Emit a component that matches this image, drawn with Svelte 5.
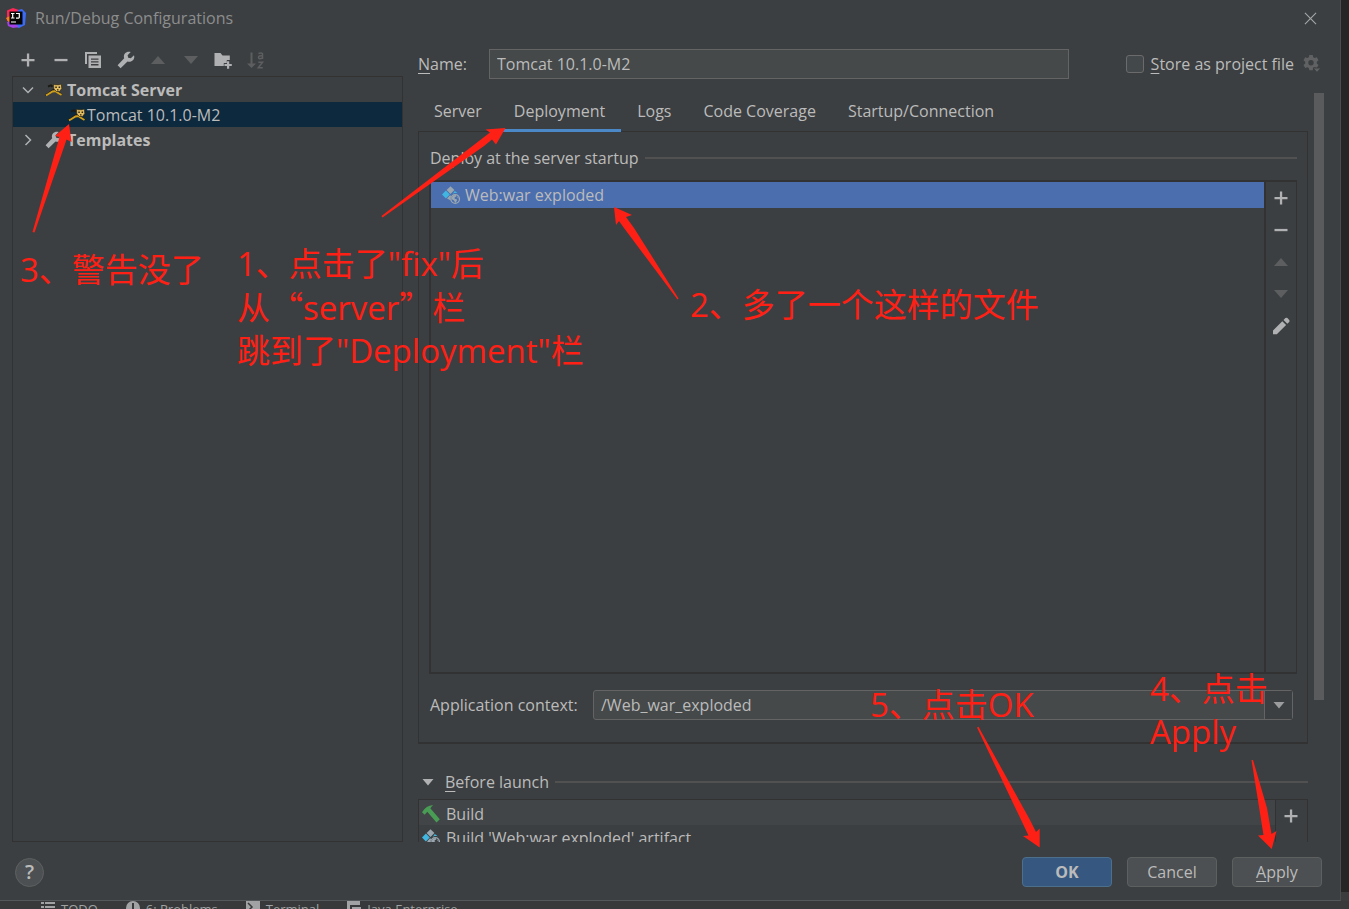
<script>
  const tabs = ['Server', 'Deployment', 'Logs', 'Code Coverage', 'Startup/Connection'];
  let activeTab = $state('Deployment');
  let name = $state('Tomcat 10.1.0-M2');
  let storeAsFile = $state(false);
</script>

{#snippet plus()}
  <svg class="icon" viewBox="0 0 16 16"><path d="M6.9 1.5h2.3v5.4h5.3v2.3H9.2v5.3H6.9V9.2H1.5V6.9h5.4z" fill="#afb1b3" /></svg>
{/snippet}
{#snippet minus()}
  <svg class="icon" viewBox="0 0 16 16"><path d="M1.5 6.9h13v2.3h-13z" fill="#afb1b3" /></svg>
{/snippet}
{#snippet up()}
  <svg class="icon" viewBox="0 0 16 16"><path d="M1 12l7-8 7 8z" fill="#5c5e60" /></svg>
{/snippet}
{#snippet down()}
  <svg class="icon" viewBox="0 0 16 16"><path d="M1 4h14l-7 8z" fill="#5c5e60" /></svg>
{/snippet}
{#snippet wrench()}
  <svg class="icon wide" viewBox="0 0 18 18"><path d="M17 4.2l-3.2 3.1-2.6-.6-.6-2.5L13.7 1C11.600.3 9.200.9 7.900 2.500 6.800 3.900 6.600 5.700 7.200 7.300L.6 14.200l3 3 6.900-6.700c1.700.7 3.700.3 5.100-1C17.200 8.200 17.700 6 17 4.200z" fill="#afb1b3" /></svg>
{/snippet}
{#snippet cat()}
  <svg class="cat" viewBox="0 0 18 14">
    <path d="M3 3.500l3-1.200 1.500 1.500M.5 12l3-1 3-3 4-2 2 2.500 4 3.500" fill="none" stroke="#1d1b16" stroke-width="2" />
    <path d="M1 12.300l2.500-1.300 4-2.500 3-.5 1.500 1.300 4.500 2.700" fill="none" stroke="#cf9f1c" stroke-width="1.900" />
    <path d="M8.500 1l1.700.7h4L16.300 1l.5 4.500-2.300 3h-3L8.800 6z" fill="#e3bd62" stroke="#2b2719" stroke-width=".7" />
    <path d="M10.300 3.500h1.500v1.400h-1.500zM13.600 3.500h1.500v1.400h-1.500zM12 6.200h1.500v1.200H12z" fill="#292414" />
  </svg>
{/snippet}
{#snippet artifact()}
  <svg class="icon wide" viewBox="0 0 18 18">
    <path d="M8.500.2l3.900 3.900-3.900 3.900-3.900-3.900z" fill="#9aa7b0" />
    <path d="M3.900 4.600l3.900 3.900-3.900 3.900L0 8.500zM12.800 4.900l3.200 2.600c-2-.8-4.400-.3-5.800 1z" fill="#40b6e0" />
    <path d="M8 9.300l1.200.7c-.8 1.400-.9 3-.4 4.500L5 12.500z" fill="#9aa7b0" />
    <circle cx="13.200" cy="13" r="4.300" fill="none" stroke="#9aa7b0" stroke-width="1.200" />
    <path d="M9.500 12.500l1.300-3 2.900-.6.800 1.400-2 1.200.3 1.200 1.900.6.300 1.300-1.700 2.400-1.300-2.500-1.800-1zM15.500 10l1.500 2.500-1.500-.5z" fill="#9aa7b0" />
  </svg>
{/snippet}

<div class="screen">
  <main class="dialog">
    <header class="titlebar">
      <svg class="logo" viewBox="0 0 20 20">
        <path d="M1 2.500L7 0l6 2-4 9-8 2z" fill="#fe2857" />
        <path d="M12 2l4-1 4 4-1 12-6 3-6-2z" fill="#3b6bf5" />
        <path d="M0 10l4-2 3 7-3 2z" fill="#fc801d" />
        <path d="M1 14l5-1 7 6-6 1-5-2z" fill="#a442e6" />
        <path d="M3.500 3.500h13v13h-13z" fill="#050505" />
        <path d="M5 5.500h3.500M6.700 5.500v4.500M5 10h3.500M10 5.500h3.300v3.700q0 1-1.800.9H10M5 14h5" fill="none" stroke="#fff" stroke-width="1.200" />
      </svg>
      <h1>Run/Debug Configurations</h1>
      <button class="plain" aria-label="Close"><svg class="close" viewBox="0 0 14 14"><path d="M1 1l12 12M13 1L1 13" stroke="#a4a6a7" stroke-width="1.200" /></svg></button>
    </header>

    <div class="body">
      <aside>
        <div class="toolbar">
          <button class="plain" aria-label="Add">{@render plus()}</button>
          <button class="plain" aria-label="Remove">{@render minus()}</button>
          <button class="plain" aria-label="Copy">
            <svg class="icon" viewBox="0 0 16 16"><path d="M0 0h12v2H2v10H0z" fill="#afb1b3" /><path d="M3.500 3.500H16V16H3.500zM6 6.500v1.300h7.500V6.500zM6 9.300v1.300h7.500V9.300zM6 12.100v1.300h7.500v-1.300z" fill="#afb1b3" fill-rule="evenodd" /></svg>
          </button>
          <button class="plain" aria-label="Edit templates">{@render wrench()}</button>
          <button class="plain" aria-label="Move up">{@render up()}</button>
          <button class="plain" aria-label="Move down">{@render down()}</button>
          <button class="plain" aria-label="New folder">
            <svg class="icon wide" viewBox="0 0 18 18"><path d="M.5 2h6l2 2.500h7.300V9h-3v3h-3v3H.5z" fill="#afb1b3" /><path d="M13 10.300h2.200v2.600h2.600v2.200h-2.600v2.600H13v-2.600h-2.600v-2.200H13z" fill="#afb1b3" /></svg>
          </button>
          <button class="plain" aria-label="Sort">
            <svg class="icon wide" viewBox="0 0 18 18"><path d="M3.500 1.500h2v11H9l-4.500 4.500L0 12.500h3.500z" fill="#5c5e60" /><path d="M11.500 2.500q3-1.300 4 .2V8M15.500 4.700q-4-.3-4 1.600 0 2.400 4 .7M11.300 11.200h4.200l-4.200 5.500h4.500" fill="none" stroke="#5c5e60" stroke-width="1.500" /></svg>
          </button>
        </div>
        <ul class="tree">
          <li>
            <svg class="chev" viewBox="0 0 12 12"><path d="M1 3.500l5 5 5-5" fill="none" stroke="#afb1b3" stroke-width="1.500" /></svg>
            {@render cat()}<b>Tomcat Server</b>
          </li>
          <li class="child selected">{@render cat()}<span>Tomcat 10.1.0-M2</span></li>
          <li>
            <svg class="chev" viewBox="0 0 12 12"><path d="M3.500 1l5 5-5 5" fill="none" stroke="#afb1b3" stroke-width="1.500" /></svg>
            {@render wrench()}<b>Templates</b>
          </li>
        </ul>
      </aside>

      <section class="editor">
        <div class="name-row">
          <label class="name-label" for="name"><u>N</u>ame:</label>
          <input id="name" class="name" type="text" bind:value={name} />
          <input id="store" class="check" type="checkbox" bind:checked={storeAsFile} />
          <label for="store"><u>S</u>tore as project file</label>
          <button class="plain gear" aria-label="Storage settings">
            <svg class="icon wide" viewBox="0 0 18 18"><path d="M6.300 0h3.400l.5 2.200 1.400.8 2.200-.7 1.700 2.900-1.700 1.600v1.700l1.700 1.600-1.700 2.900-2.200-.7-1.400.8-.5 2.200H6.300l-.5-2.200-1.400-.8-2.200.7-1.700-2.900 1.700-1.600V6.800L.5 5.200l1.700-2.900 2.200.7 1.400-.8zM8 5a2.700 2.700 0 100 5.400A2.700 2.700 0 008 5z" fill="#5f6163" fill-rule="evenodd" /><path d="M10 13h8l-4 4.500z" fill="#5f6163" stroke="#3c3f41" /></svg>
          </button>
        </div>

        <div class="scroller">
          <div class="content">
            <div class="tabs" role="tablist">
              {#each tabs as tab}
                <button role="tab" aria-selected={activeTab === tab} class:active={activeTab === tab} onclick={() => (activeTab = tab)}>{tab}</button>
              {/each}
            </div>
            <div class="panel">
              <h2>Deploy at the server startup</h2>
              <div class="deploy">
                <ul><li class="picked">{@render artifact()}<span>Web:war exploded</span></li></ul>
                <div class="side">
                  <button class="plain" aria-label="Add artifact">{@render plus()}</button>
                  <button class="plain" aria-label="Remove artifact">{@render minus()}</button>
                  <button class="plain" aria-label="Move artifact up">{@render up()}</button>
                  <button class="plain" aria-label="Move artifact down">{@render down()}</button>
                  <button class="plain" aria-label="Edit artifact">
                    <svg class="icon wide" viewBox="0 0 18 18"><path d="M1 13.500L10.300 4.200l3.800 3.800L4.800 17.200H1zM11.500 3l1.900-1.900q1-.8 2 0l1.800 1.800q.8 1 0 2L15.300 6.800z" fill="#afb1b3" /></svg>
                  </button>
                </div>
              </div>
              <div class="context">
                <label for="context">Application context:</label>
                <div class="combo">
                  <select id="context"><option>/Web_war_exploded</option></select>
                  <span class="arrow"><svg viewBox="0 0 12 8"><path d="M.5 1h11L6 7.500z" fill="#9a9c9e" /></svg></span>
                </div>
              </div>
            </div>

            <h2 class="before">
              <svg viewBox="0 0 12 8"><path d="M.5 1h11L6 7.500z" fill="#afb1b3" /></svg><span><u>B</u>efore launch</span>
            </h2>
            <div class="tasks">
              <ul>
                <li class="stripe">
                  <svg class="icon wide" viewBox="0 0 18 18"><path d="M0 7.200Q4 .5 11 0L8.300 3.300l9.500 10.900-3.300 3.300L5.300 6.800 2.700 9.800z" fill="#499c54" /></svg>
                  <span>Build</span>
                </li>
                <li>{@render artifact()}<span>Build 'Web:war exploded' artifact</span></li>
              </ul>
              <div class="side"><button class="plain" aria-label="Add task">{@render plus()}</button></div>
            </div>
          </div>
          <div class="track"><div class="thumb"></div></div>
        </div>
      </section>
    </div>

    <footer>
      <button class="help" aria-label="Help">?</button>
      <button class="btn primary">OK</button>
      <button class="btn">Cancel</button>
      <button class="btn"><u>A</u>pply</button>
    </footer>
  </main>

  <div class="edge"></div>

  <nav class="status">
    <span><svg viewBox="0 0 14 14"><path d="M0 1h3v2H0zM4 1h10v2H4zM0 5h3v2H0zM4 5h10v2H4zM0 9h3v2H0zM4 9h10v2H4z" fill="#a0a2a3" /></svg>TODO</span>
    <span><svg viewBox="0 0 14 14"><circle cx="7" cy="7" r="7" fill="#a0a2a3" /><path d="M6 2h2v6H6z" fill="#37393a" /></svg>6: Problems</span>
    <span><svg viewBox="0 0 14 14"><path d="M0 0h14v14H0z" fill="#a0a2a3" /><path d="M2 2l4 4-4 4" fill="none" stroke="#37393a" stroke-width="1.500" /></svg>Terminal</span>
    <span><svg viewBox="0 0 14 14"><path d="M0 0h13v4H3v8H0zM5 6h9v8H5z" fill="#a0a2a3" /></svg>Java Enterprise</span>
  </nav>

  <svg class="arrows" fill="#ff2015">
    <path d="M69 124L55 136l4.500 1L32.500 232l2 .5L64 147l2.500-7.500 5 2.500z" />
    <path d="M505.500 128L485.500 129.500l4.500 3L381.500 216l1 1.500L484 146l8-6.500 4 5z" />
    <path d="M614 207l18 8-6 2L634 228l44.500 70.500-1 1L624 228l-5-7-3 4z" />
    <path d="M1039.700 847.500L1023 836l5.500-.5L977 727.500l1.500-.7L1030 820l6 12 3.700-3.500z" />
    <path d="M1271.700 849L1258 835.500l5.500-.5L1251.500 760h1.500L1267 808l4.500 26 5-3z" />
  </svg>
  <p class="note n1">1、点击了"fix"后<br />从<q>“</q>server<q>”</q>栏<br />跳到了"Deployment"栏</p>
  <p class="note n2">2、多了一个这样的文件</p>
  <p class="note n3">3、警告没了</p>
  <p class="note n4">4、点击<br />Apply</p>
  <p class="note n5">5、点击OK</p>
</div>

<style>
  :global(body) { margin: 0; background: #262626; }
  .screen {
    position: relative;
    display: grid;
    grid-template: minmax(0, 1fr) 8px / minmax(0, 1fr) 8px;
    height: 100vh;
    overflow: hidden;
    font: 16px/24px 'Open Sans', 'Noto Sans CJK SC', sans-serif;
    color: #bbbbbb;
  }
  .screen * { box-sizing: border-box; }
  ul { list-style: none; margin: 0; padding: 0; }
  li { display: flex; align-items: center; height: 25px; white-space: nowrap; }
  h1, h2 { margin: 0; font-size: 16px; font-weight: 400; white-space: nowrap; }
  svg { display: block; flex: none; }
  button, input, select { font: inherit; color: inherit; margin: 0; }
  label { white-space: nowrap; }
  u { text-underline-offset: 3px; text-decoration-thickness: 1px; }
  .plain { display: grid; place-items: center; padding: 0; border: 0; background: none; }
  .icon { width: 16px; height: 16px; }
  .icon.wide { width: 18px; height: 18px; }

  .dialog {
    display: flex;
    flex-direction: column;
    min-height: 0;
    background: #3c3f41;
    border-right: 1px solid #4b4d4f;
    border-bottom: 1px solid #55585a;
  }
  .titlebar { display: flex; align-items: center; height: 36px; padding: 0 23px 0 6px; }
  .titlebar h1 { flex: 1; margin-left: 9px; color: #8c8d8e; }
  .logo { width: 20px; height: 20px; }
  .close { width: 13px; height: 13px; }

  .body { display: flex; flex: 1; gap: 15px; min-height: 0; padding: 12px 15px 0 12px; }
  aside { display: flex; flex-direction: column; width: 391px; }
  .toolbar { display: flex; justify-content: space-between; width: 260px; height: 28px; padding: 0 4px; }
  .toolbar button { width: 24px; height: 24px; }
  .tree { flex: 1; border: 1px solid #323232; }
  .tree li { padding-left: 9px; }
  .tree .child { padding-left: 55px; }
  .tree .selected { background: #0d293e; }
  .chev { width: 12px; height: 12px; margin-right: 11px; }
  .tree .cat { width: 18px; height: 14px; margin-right: 4px; }
  .tree .child .cat { margin-right: 1px; }
  .tree .wide { margin-right: 4px; }
  b { font-weight: 700; }

  .editor { display: flex; flex: 1; flex-direction: column; min-width: 0; }
  .name-row { display: flex; align-items: center; height: 32px; padding-right: 4px; }
  .name-label { width: 71px; }
  .name {
    flex: 1;
    min-width: 0;
    height: 30px;
    margin-right: 57px;
    padding: 0 7px;
    border: 1px solid #646464;
    background: #45494a;
    outline: 0;
  }
  .check {
    appearance: none;
    width: 18px;
    height: 18px;
    margin-right: 7px;
    border: 1px solid #6b6b6b;
    border-radius: 3px;
    background: #43494a;
  }
  .gear { margin-left: 9px; }

  .scroller { display: flex; flex: 1; min-height: 0; margin-top: 13px; overflow: hidden; }
  .content { flex: 1; min-width: 0; }
  .track { width: 17px; padding-left: 6px; }
  .thumb { width: 10px; height: 81%; background: #595b5d; }
  .tabs { display: flex; height: 38px; }
  .tabs button {
    height: 39px;
    padding: 0 16px 1px;
    border: 0;
    border-bottom: 3px solid transparent;
    background: none;
    white-space: nowrap;
  }
  .tabs .active { border-color: #4a88c7; }
  .panel { padding: 14px 10px 22px; border: 1px solid #323232; border-bottom-width: 2px; }
  h2 { display: flex; align-items: center; gap: 6px; }
  h2::after { content: ''; flex: 1; height: 2px; background: #515151; }
  .panel h2 { padding-left: 1px; }
  .deploy { display: flex; height: 494px; margin-top: 10px; border: 2px solid #323232; border-right-width: 1px; }
  .deploy ul { flex: 1; }
  .side { width: 32px; border-left: 2px solid #323232; }
  .side button { width: 30px; height: 32px; }
  .picked { height: 26px; padding-left: 11px; gap: 5px; background: #4b6eaf; }
  .context { display: flex; align-items: center; margin-top: 16px; padding: 0 4px 0 1px; }
  .context label { width: 163px; }
  .combo { display: flex; flex: 1; height: 30px; border: 1px solid #646464; border-radius: 3px; background: #45494a; }
  .combo select { flex: 1; appearance: none; min-width: 0; padding: 0 7px; border: 0; background: none; }
  .arrow { display: grid; place-items: center; width: 28px; border-left: 1px solid #646464; background: #3c3f41; }
  .arrow svg, .before svg { width: 12px; height: 8px; }
  .before { margin-top: 26px; padding-left: 4px; }
  .before span { margin-left: 5px; }
  .tasks { display: flex; height: 100px; margin-top: 5px; border: 1px solid #323232; }
  .tasks ul { flex: 1; }
  .tasks li { padding-left: 3px; gap: 6px; }
  .tasks .side { border-left-width: 1px; }
  .stripe { padding-top: 2px; background: #414547; }

  footer { display: flex; align-items: center; gap: 15px; height: 58px; padding: 2px 18px 0 15px; }
  .help {
    width: 29px;
    height: 29px;
    margin-right: auto;
    padding: 0;
    border: 1px solid #5e6060;
    border-radius: 50%;
    background: #4c5052;
    font-size: 20px;
    font-weight: 600;
    line-height: 24px;
  }
  .btn { width: 90px; height: 30px; padding: 0; border: 1px solid #5e6060; border-radius: 4px; background: #4c5052; }
  .primary { border-color: #4c708c; background: #365880; font-weight: 700; }

  .edge { background: linear-gradient(#262626, #262626) no-repeat 0 0 / 100% calc(100% - 9px), #3a3c3e; }
  .status {
    display: flex;
    grid-column: 1 / -1;
    gap: 28px;
    padding-left: 41px;
    overflow: hidden;
    background: #37393a;
    font-size: 13px;
    line-height: 16px;
    color: #a0a2a3;
  }
  .status span { display: flex; gap: 6px; white-space: nowrap; }
  .status svg { width: 14px; height: 14px; }

  .arrows { position: absolute; inset: 0; width: 100%; height: 100%; pointer-events: none; }
  .note { position: absolute; margin: 0; font-size: 33px; line-height: 43px; color: #ff2015; white-space: nowrap; pointer-events: none; }
  q { quotes: none; font-family: 'Noto Sans CJK SC', sans-serif; }
  .n1 { left: 237px; top: 242px; }
  .n2 { left: 690px; top: 283px; }
  .n3 { left: 20px; top: 248px; }
  .n4 { left: 1150px; top: 667px; }
  .n5 { left: 870px; top: 683px; }
</style>
